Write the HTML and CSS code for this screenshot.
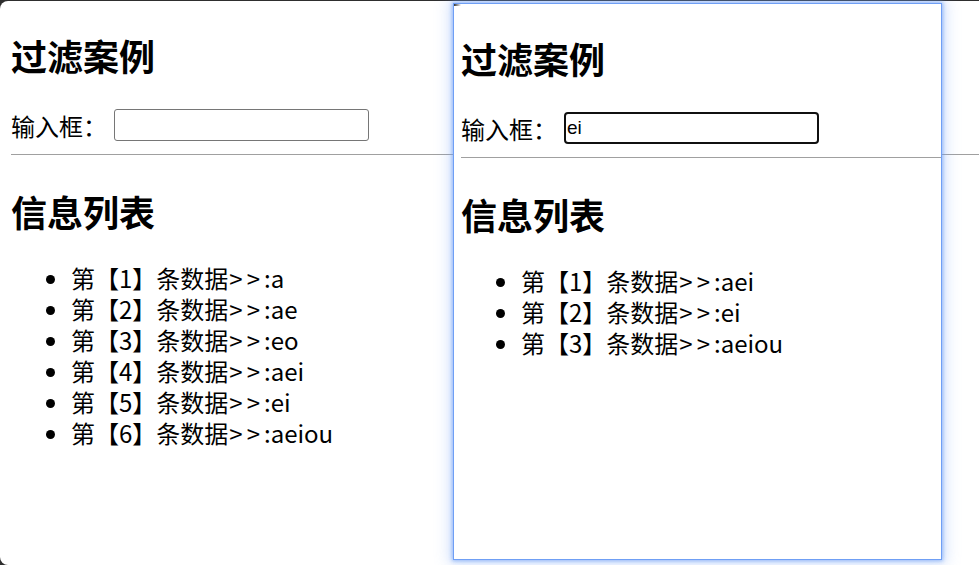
FILE: index.html
```html
<!doctype html>
<html lang="zh-CN">
    <head>
        <meta charset="UTF-8">
        <meta name="viewport" content="width=device-width, initial-scale=1.0">
        <title>过滤案例</title>
        <link rel="stylesheet" href="styles.css">
    </head>
    <body>
        <div class="desk">
            <!-- Fenêtre d'arrière-plan : liste complète -->
            <div class="win back">
                <div class="page">
                    <h2>过滤案例</h2>
                    <div class="filter-row">
                        <label for="kw1">输入框：</label>
                        <input id="kw1" type="text" value="">
                    </div>
                    <hr>
                    <h2>信息列表</h2>
                    <ul class="info-list">
                        <li>第【1】条数据<span class="sep">&gt;&gt;</span>:a</li>
                        <li>第【2】条数据<span class="sep">&gt;&gt;</span>:ae</li>
                        <li>第【3】条数据<span class="sep">&gt;&gt;</span>:eo</li>
                        <li>第【4】条数据<span class="sep">&gt;&gt;</span>:aei</li>
                        <li>第【5】条数据<span class="sep">&gt;&gt;</span>:ei</li>
                        <li>第【6】条数据<span class="sep">&gt;&gt;</span>:aeiou</li>
                    </ul>
                </div>
            </div>

            <!-- Fenêtre au premier plan : liste filtrée par "ei" -->
            <div class="win front">
                <span class="grip"></span>
                <div class="page">
                    <h2>过滤案例</h2>
                    <div class="filter-row">
                        <label for="kw2">输入框：</label>
                        <input id="kw2" class="focused" type="text" value="ei">
                    </div>
                    <hr>
                    <h2>信息列表</h2>
                    <ul class="info-list">
                        <li>第【1】条数据<span class="sep">&gt;&gt;</span>:aei</li>
                        <li>第【2】条数据<span class="sep">&gt;&gt;</span>:ei</li>
                        <li>第【3】条数据<span class="sep">&gt;&gt;</span>:aeiou</li>
                    </ul>
                </div>
            </div>
        </div>
    </body>
</html>
```

FILE: styles.css
```css
:root {
    --desk-color: #2e2e2e;
    --page-color: #ffffff;
    --text-color: #000000;
    --rule-color: #a0a0a0;
    --frame-color: #6f9ff5;
}
* {
    box-sizing: border-box;
}
html, body {
    margin: 0;
    padding: 0;
}
body {
    font-family: "Noto Sans CJK SC", "Noto Sans", sans-serif;
    color: var(--text-color);
    background-color: var(--desk-color);
    overflow: hidden;
}

/* Bureau et fenêtres */
.desk {
    position: relative;
    height: 565px;
    padding-top: 1px;
}

.win {
    background-color: var(--page-color);
}

.page {
    display: flow-root;
}

.back {
    height: 564px;
    border-radius: 8px 0 0 8px;
}

.back .page {
    padding-left: 11px;
}

.front {
    position: absolute;
    left: 453px;
    top: 3px;
    width: 489px;
    height: 557px;
    border: 1px solid var(--frame-color);
    box-shadow: 0 0 4px 1px rgba(111, 159, 245, 0.7), 0 0 14px 4px rgba(111, 159, 245, 0.3);
}

.front .page {
    padding-left: 7px;
}

.grip {
    position: absolute;
    left: 0;
    top: 0;
    width: 7px;
    height: 2px;
    background: linear-gradient(to right, #333, rgba(60, 60, 60, 0));
}

/* Contenu de la page */
h2 {
    margin: 30px 0 0;
    font-size: 36px;
    line-height: 48px;
    font-weight: 700;
}

.filter-row {
    display: flex;
    align-items: center;
    height: 36px;
    margin-top: 28px;
    font-size: 24px;
}

.filter-row input {
    width: 255px;
    height: 32px;
    margin-left: 7px;
    padding: 0 3px;
    border: 1px solid #767676;
    border-radius: 3px;
    font-family: "Liberation Sans", Arial, sans-serif;
    font-size: 19px;
    outline: none;
}

.filter-row input.focused {
    border: 2px solid #101010;
    border-radius: 4px;
    padding: 0 1px;
}

hr {
    margin: 11px 0 0;
    border: 0;
    border-top: 1px solid var(--rule-color);
}

hr + h2 {
    margin-top: 32px;
}

.info-list {
    margin: 27px 0 0;
    padding-left: 60px;
    font-size: 24px;
    line-height: 31px;
}

.sep {
    letter-spacing: 4px;
    margin-left: 1px;
}
```
